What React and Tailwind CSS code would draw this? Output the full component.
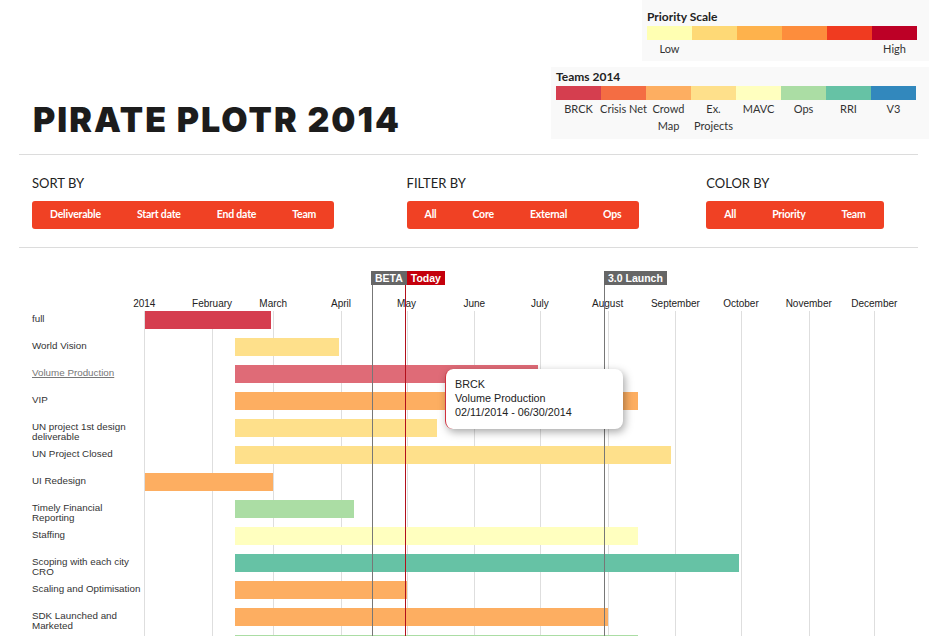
import React from "react";

const ORIGIN = 144.3;
const PX = 2.1856;
const xAt = (d) => ORIGIN + d * PX;

const months = [
  ["2014", 0],
  ["February", 31],
  ["March", 59],
  ["April", 90],
  ["May", 120],
  ["June", 151],
  ["July", 181],
  ["August", 212],
  ["September", 243],
  ["October", 273],
  ["November", 304],
  ["December", 334],
];

const rows = [
  { l: ["full"], s: 0.3, e: 58, c: "#d53e4f" },
  { l: ["World Vision"], s: 41.5, e: 89, c: "#fee08b" },
  { l: ["Volume Production"], s: 41.5, e: 180, c: "#df6b77", hover: true },
  { l: ["VIP"], s: 41.5, e: 226, c: "#fdae61" },
  { l: ["UN project 1st design", "deliverable"], s: 41.5, e: 134, c: "#fee08b" },
  { l: ["UN Project Closed"], s: 41.5, e: 241, c: "#fee08b" },
  { l: ["UI Redesign"], s: 0.3, e: 59, c: "#fdae61" },
  { l: ["Timely Financial", "Reporting"], s: 41.5, e: 96, c: "#abdda4" },
  { l: ["Staffing"], s: 41.5, e: 226, c: "#ffffbf" },
  { l: ["Scoping with each city", "CRO"], s: 41.5, e: 272, c: "#66c2a5" },
  { l: ["Scaling and Optimisation"], s: 41.5, e: 120, c: "#fdae61" },
  { l: ["SDK Launched and", "Marketed"], s: 41.5, e: 212, c: "#fdae61" },
  { l: [], s: 41.5, e: 226, c: "#abdda4" },
];

const priority = ["#ffffb2", "#fed976", "#feb24c", "#fd8d3c", "#f03b20", "#bd0026"];
const teams = [
  ["#d53e4f", ["BRCK"]],
  ["#f46d43", ["Crisis Net"]],
  ["#fdae61", ["Crowd", "Map"]],
  ["#fee08b", ["Ex.", "Projects"]],
  ["#ffffbf", ["MAVC"]],
  ["#abdda4", ["Ops"]],
  ["#66c2a5", ["RRI"]],
  ["#3288bd", ["V3"]],
];

function ButtonGroup({ items }) {
  return (
    <div className="mt-[10px] inline-flex h-[28px] rounded-[3px] bg-[#f04124]">
      {items.map((t) => (
        <button
          key={t}
          className="flex h-full items-center px-[18px] text-[10.5px] font-bold tracking-[-0.2px] text-white"
        >
          {t}
        </button>
      ))}
    </div>
  );
}

function Control({ title, items, span }) {
  return (
    <div className={`${span} px-[13px]`}>
      <div className="text-[13px] leading-[16px] uppercase text-[#222]">{title}</div>
      <ButtonGroup items={items} />
    </div>
  );
}

export default function App() {
  return (
    <div className="w-[943px] overflow-hidden bg-white font-['Lato',sans-serif] text-[#222]">
      {/* Header */}
      <header className="flex items-start justify-between pr-[14px]">
        <h1 className="ml-[33px] mt-[103px] font-['Inter',sans-serif] text-[34px] font-black leading-none tracking-[2px] text-[#1c1c1c]">
          PIRATE PLOTR 2014
        </h1>
        <div className="flex flex-col items-end">
          <div className="h-[61px] w-[287px] bg-[#f9f9f9] pl-[5px] pt-[9px]">
            <div className="text-[12px] font-bold leading-[15px] text-[#222]">Priority Scale</div>
            <div className="mt-[2px] flex h-[14px]">
              {priority.map((c) => (
                <div key={c} className="h-full w-[45px]" style={{ background: c }} />
              ))}
            </div>
            <div className="flex text-[11px] leading-[17px] text-[#333]">
              {priority.map((c, i) => (
                <div key={c} className="w-[45px] text-center">
                  {i === 0 ? "Low" : i === 5 ? "High" : ""}
                </div>
              ))}
            </div>
          </div>
          <div className="mt-[6px] h-[72px] w-[378px] bg-[#f9f9f9] pl-[5px] pt-[2px]">
            <div className="text-[12px] font-bold leading-[15px] text-[#222]">Teams 2014</div>
            <div className="mt-[2px] flex h-[14px]">
              {teams.map(([c]) => (
                <div key={c} className="h-full w-[45px]" style={{ background: c }} />
              ))}
            </div>
            <div className="flex text-[11px] leading-[17px] text-[#333]">
              {teams.map(([c, lines]) => (
                <div key={c} className="flex w-[45px] flex-col items-center whitespace-nowrap">
                  {lines.map((ln) => (
                    <span key={ln}>{ln}</span>
                  ))}
                </div>
              ))}
            </div>
          </div>
        </div>
      </header>

      <div className="ml-[19px] mt-[15px] w-[899px] border-t border-[#dcdcdc]" />

      {/* Controls */}
      <div className="ml-[19px] grid w-[899px] grid-cols-12 border-b border-[#dcdcdc] pb-[18px] pt-[20px]">
        <Control span="col-span-5" title="Sort by" items={["Deliverable", "Start date", "End date", "Team"]} />
        <Control span="col-span-4" title="Filter by" items={["All", "Core", "External", "Ops"]} />
        <Control span="col-span-3" title="Color by" items={["All", "Priority", "Team"]} />
      </div>

      {/* Chart */}
      <div className="relative mt-[23px] font-['Liberation_Sans',Arial,sans-serif]">
        {/* grid lines */}
        <div className="pointer-events-none absolute inset-0">
          {months.map(([m, d]) => (
            <div
              key={m}
              className="absolute bottom-0 top-[40px] w-px bg-[#dedede]"
              style={{ left: Math.round(xAt(d)) }}
            />
          ))}
        </div>

        {/* month labels and markers */}
        <div className="relative h-[40px]">
          {months.map(([m, d]) => (
            <div
              key={m}
              className="absolute top-[27px] -translate-x-1/2 whitespace-nowrap text-[10px] leading-[12px] text-[#222]"
              style={{ left: xAt(d) }}
            >
              {m}
            </div>
          ))}
          <div className="absolute top-0 flex" style={{ left: Math.round(xAt(104)) - 1 }}>
            <div className="h-[14px] bg-[#666] px-[4px] text-[10.5px] font-bold leading-[14px] text-white">BETA</div>
            <div className="h-[14px] bg-[#c4000c] px-[4px] text-[10.5px] font-bold leading-[14px] text-white">Today</div>
          </div>
          <div
            className="absolute top-0 h-[14px] bg-[#666] px-[4px] text-[10.5px] font-bold leading-[14px] text-white"
            style={{ left: Math.round(xAt(210.5)) }}
          >
            3.0 Launch
          </div>
        </div>

        {/* rows */}
        <div className="relative z-10">
          {rows.map((r, i) => (
            <div key={i} className="flex h-[27px]">
              <div
                className={`w-[144px] shrink-0 whitespace-nowrap pl-[32px] pt-[3px] text-[9.8px] leading-[10px] ${
                  r.hover ? "text-[#777] underline" : "text-[#333]"
                }`}
              >
                {r.l.map((ln) => (
                  <div key={ln}>{ln}</div>
                ))}
              </div>
              <div className="relative flex-1">
                <div
                  className="h-[18px]"
                  style={{
                    marginLeft: xAt(r.s) - 144,
                    width: xAt(r.e) - xAt(r.s),
                    background: r.c,
                  }}
                />
              </div>
            </div>
          ))}
        </div>

        {/* marker lines */}
        <div className="pointer-events-none absolute inset-0 z-20">
          <div className="absolute bottom-0 top-[14px] w-px bg-[#777]" style={{ left: Math.round(xAt(104)) }} />
          <div className="absolute bottom-0 top-[14px] w-px bg-[#b3101b]" style={{ left: Math.round(xAt(119.3)) }} />
          <div className="absolute bottom-0 top-[14px] w-px bg-[#777]" style={{ left: Math.round(xAt(210.5)) }} />
        </div>

        {/* tooltip */}
        <div className="absolute left-[445px] top-[98px] z-30 h-[60px] w-[178px] rounded-[8px] border-l-[1.5px] border-[#d0303e] bg-white pl-[9px] pt-[8px] text-[10.8px] leading-[14px] text-[#222] shadow-[2px_3px_8px_rgba(0,0,0,0.35)]">
          <div>BRCK</div>
          <div>Volume Production</div>
          <div>02/11/2014 - 06/30/2014</div>
        </div>
      </div>
    </div>
  );
}
